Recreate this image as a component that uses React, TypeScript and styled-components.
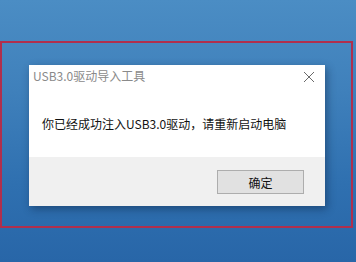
import React from 'react';
import styled, { createGlobalStyle } from 'styled-components';

const GlobalStyle = createGlobalStyle`
  html, body {
    margin: 0;
    padding: 0;
  }
  body {
    font-family: "Noto Sans CJK SC", "Noto Sans", sans-serif;
  }
`;

const Desktop = styled.div`
  width: 356px;
  height: 262px;
  box-sizing: border-box;
  padding-top: 41px;
  overflow: hidden;
  background: linear-gradient(180deg, #4b8dc4 0%, #3f80bb 35%, #2f70b0 70%, #2866a8 100%);
`;

const Frame = styled.div`
  width: 353px;
  height: 187px;
  box-sizing: border-box;
  border: 2px solid #b02f4d;
  padding: 22px 0 0 27px;
`;

const Dialog = styled.div`
  width: 296px;
  height: 141px;
  background: #ffffff;
  display: flex;
  flex-direction: column;
  box-shadow: 2px 3px 8px rgba(10, 30, 60, 0.45);
`;

const TitleBar = styled.div`
  height: 22px;
  display: flex;
  align-items: center;
  justify-content: space-between;
  padding: 0 10px 0 4px;
`;

const Title = styled.span`
  font-size: 12px;
  color: #8a8a8a;
  line-height: 1;
`;

const CloseButton = styled.span`
  display: flex;
  width: 12px;
  height: 12px;
  margin-top: 2px;
`;

const Body = styled.div`
  flex: 1;
  display: flex;
  align-items: center;
  padding: 4px 0 0 13px;
`;

const Message = styled.span`
  font-size: 12px;
  color: #111111;
  line-height: 1;
  white-space: nowrap;
`;

const Footer = styled.div`
  height: 49px;
  background: #f0f0f0;
  display: flex;
  align-items: center;
  justify-content: flex-end;
  padding-right: 21px;
`;

const Button = styled.button`
  width: 87px;
  height: 24px;
  box-sizing: border-box;
  border: 1px solid #adadad;
  background: #e1e1e1;
  font-family: inherit;
  font-size: 12px;
  color: #111111;
  padding: 0;
  margin-top: 1px;
`;

export default function App() {
  return (
    <>
      <GlobalStyle />
      <Desktop>
        <Frame>
          <Dialog>
            <TitleBar>
              <Title>USB3.0驱动导入工具</Title>
              <CloseButton>
                <svg width="12" height="12" viewBox="0 0 12 12">
                  <path d="M1 1 L11 11 M11 1 L1 11" stroke="#6a6a6a" strokeWidth="1" fill="none" />
                </svg>
              </CloseButton>
            </TitleBar>
            <Body>
              <Message>你已经成功注入USB3.0驱动，请重新启动电脑</Message>
            </Body>
            <Footer>
              <Button>确定</Button>
            </Footer>
          </Dialog>
        </Frame>
      </Desktop>
    </>
  );
}
